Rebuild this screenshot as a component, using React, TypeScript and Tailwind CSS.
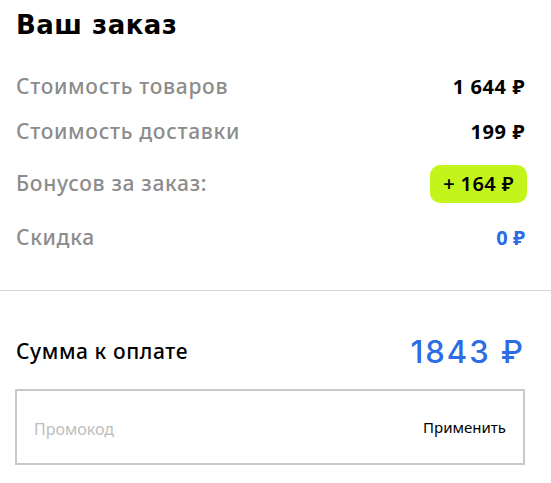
import React from "react";

const Row = ({ label, children, className = "" }: { label: string; children: React.ReactNode; className?: string }) => (
  <div className={`flex items-center justify-between ${className}`}>
    <span className="text-[21px] font-medium text-[#8c8c8c] tracking-[0.7px]" style={{ fontFamily: '"Noto Sans", sans-serif' }}>{label}</span>
    {children}
  </div>
);

export default function App() {
  return (
    <div className="w-[551px] h-[483px] bg-white overflow-hidden" style={{ fontFamily: '"Noto Sans", sans-serif' }}>
      <div className="pl-4 pr-[26px]">
        <h1 className="pt-[8px] text-[26px] leading-[34px] font-bold text-black tracking-[0.5px]" style={{ fontFamily: '"DejaVu Sans", sans-serif' }}>
          Ваш заказ
        </h1>
        <div className="mt-[31px] flex flex-col">
          <Row label="Стоимость товаров" className="h-[28px]">
            <span className="text-[20px] font-bold text-black tracking-[0.6px]">1 644 ₽</span>
          </Row>
          <Row label="Стоимость доставки" className="h-[28px] mt-[17px]">
            <span className="text-[20px] font-bold text-black tracking-[0.6px]">199 ₽</span>
          </Row>
          <Row label="Бонусов за заказ:" className="h-[38px] mt-[19px]">
            <span className="h-[38px] px-[13px] -mr-[2px] flex items-center rounded-[10px] bg-[#c3f51c] text-[20px] font-semibold text-black tracking-[0.4px]">+ 164 ₽</span>
          </Row>
          <Row label="Скидка" className="h-[28px] mt-[21px]">
            <span className="text-[20px] font-bold text-[#2c6ce6]">0 ₽</span>
          </Row>
        </div>
      </div>
      <div className="mt-[38px] h-px bg-[#d6d6d6]" />
      <div className="pl-4 pr-[26px]">
        <div className="mt-[43px] flex items-center justify-between h-[36px]">
          <span className="text-[21px] font-medium text-black tracking-[0.6px]">Сумма к оплате</span>
          <span className="text-[31px] font-medium text-[#2c6ce6] tracking-[2px]" style={{ fontFamily: 'Inter, sans-serif' }}>1843 ₽</span>
        </div>
        <div className="mt-[19px] h-[76px] -ml-px border-2 border-[#c9c9c9] flex items-center justify-between pl-[17px] pr-[17px]">
          <span className="text-[16px] text-[#bdbdbd] mt-[3px]">Промокод</span>
          <span className="text-[15px] text-black">Применить</span>
        </div>
      </div>
    </div>
  );
}
